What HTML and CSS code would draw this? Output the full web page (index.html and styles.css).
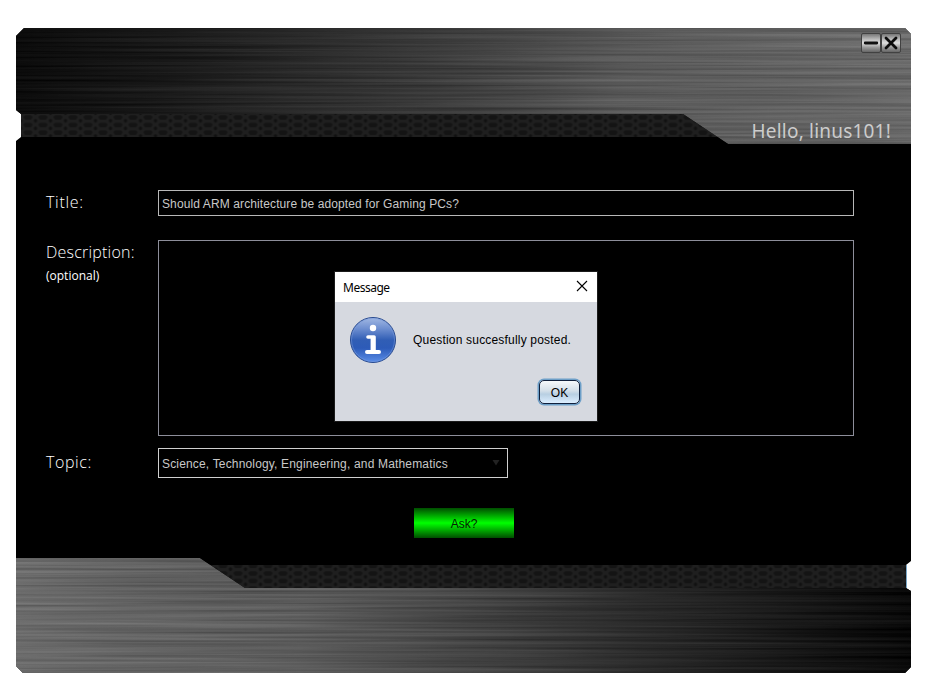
FILE: index.html
```html
<!DOCTYPE html>
<html lang="en">
<head>
<meta charset="utf-8">
<title>Ask a question</title>
<link rel="stylesheet" href="styles.css">
</head>
<body>
<main class="window">
  <svg class="chrome" width="895" height="645" viewBox="0 0 895 645" aria-hidden="true">
    <defs>
      <linearGradient id="metalTop" gradientUnits="userSpaceOnUse" x1="0" y1="0" x2="895" y2="50">
        <stop offset="0" stop-color="#0b0b0b"/><stop offset=".17" stop-color="#191919"/>
        <stop offset=".34" stop-color="#2c2c2c"/><stop offset=".52" stop-color="#434343"/>
        <stop offset=".68" stop-color="#595959"/><stop offset="1" stop-color="#696969"/>
      </linearGradient>
      <linearGradient id="metalBottom" gradientUnits="userSpaceOnUse" x1="0" y1="595" x2="895" y2="645">
        <stop offset="0" stop-color="#6b6b6b"/><stop offset=".32" stop-color="#5b5b5b"/>
        <stop offset=".5" stop-color="#434343"/><stop offset=".7" stop-color="#2a2a2a"/>
        <stop offset=".87" stop-color="#171717"/><stop offset="1" stop-color="#090909"/>
      </linearGradient>
      <filter id="brushed" x="0" y="0" width="100%" height="100%" color-interpolation-filters="sRGB">
        <feTurbulence type="fractalNoise" baseFrequency="0.003 0.35" numOctaves="3" seed="21" result="n"/>
        <feColorMatrix in="n" type="matrix" values=".5 0 0 0 .25  .5 0 0 0 .25  .5 0 0 0 .25  0 0 0 0 1" result="g"/>
        <feComposite in="SourceGraphic" in2="g" operator="arithmetic" k1=".5" k2=".75" k3=".2" k4="-.1" result="m"/>
        <feComposite in="m" in2="SourceGraphic" operator="in"/>
      </filter>
      <pattern id="mesh" width="15" height="7.6" patternUnits="userSpaceOnUse" x="4.5" y="86">
        <rect width="15" height="7.6" fill="#1f1f1f"/>
        <path d="M4.5 1.2h6l1.8 2-1.8 2.4h-6l-1.8-2.4z" fill="#141414"/>
        <path d="M-1.6 5.6L0 4.7 1.6 5.6v2L0 9l-1.6-1.4zM-1.6-2L0-2.9 1.6-2V0L0 1.4-1.6 0zM13.4 5.6l1.6-.9 1.6.9v2L15 9l-1.6-1.4zM13.4-2l1.6-.9 1.6.9v2L15 1.4 13.4 0z" fill="#111"/>
      </pattern>
      <clipPath id="frame"><path d="M8 0H889L895 6V533L890 537V560L895 563V639L889 645H7L0 638V113L5 109V86L0 82V8z"/></clipPath>
    </defs>
    <g clip-path="url(#frame)">
      <rect width="895" height="645" fill="#000"/>
      <rect x="5" y="86" width="708" height="23" fill="url(#mesh)"/>
      <rect x="184" y="537" width="706" height="23" fill="url(#mesh)"/>
      <path d="M0 0H895V116H712L667 86H0z" fill="url(#metalTop)" filter="url(#brushed)"/>
      <path d="M0 530H184L229 560H895V645H0z" fill="url(#metalBottom)" filter="url(#brushed)"/>
    </g>
    <path d="M890.5 537v23" stroke="#7aa7c7"/>
  </svg>

  <header class="header">
    <div class="controls">
      <button class="control" aria-label="Minimize"><svg width="20" height="20" viewBox="0 0 20 20"><path d="M4.2 10h11.6" stroke="#111" stroke-width="2.8" stroke-linecap="round"/></svg></button>
      <button class="control" aria-label="Close"><svg width="20" height="20" viewBox="0 0 20 20"><path d="M5 5l10 10M15 5L5 15" stroke="#0c0c0c" stroke-width="2.8" stroke-linecap="round"/></svg></button>
    </div>
    <div class="greeting">Hello, linus101!</div>
  </header>

  <form class="form">
    <div class="row row-title">
      <div class="label label-title">Title:</div>
      <div class="field title-field"><span class="value-title">Should ARM architecture be adopted for Gaming PCs?</span></div>
    </div>
    <div class="row row-description">
      <div class="label"><span class="label-description">Description:</span><div class="optional"><span>(optional)</span></div></div>
      <div class="field area"></div>
    </div>
    <div class="row row-topic">
      <div class="label label-topic">Topic:</div>
      <div class="field select"><span class="value-topic">Science, Technology, Engineering, and Mathematics</span><svg width="8" height="6" viewBox="0 0 8 6"><path d="M.5 0h7L4 5.5z" fill="#222"/></svg></div>
    </div>
    <button class="ask" type="button">Ask?</button>
  </form>

  <section class="dialog" role="dialog">
    <div class="dialog-bar">
      <span class="dialog-title">Message</span>
      <svg class="dialog-close" width="12" height="12" viewBox="0 0 12 12"><path d="M1 1l10 10M11 1L1 11" stroke="#000" stroke-width="1.1"/></svg>
    </div>
    <div class="dialog-body">
      <svg width="48" height="48" viewBox="0 0 48 48">
        <defs><linearGradient id="info" x2="0" y2="1"><stop offset="0" stop-color="#a3b9e3"/><stop offset=".25" stop-color="#6d8ed0"/><stop offset=".5" stop-color="#315eb5"/><stop offset=".68" stop-color="#2d5bb8"/><stop offset="1" stop-color="#5b8ee8"/></linearGradient></defs>
        <circle cx="24" cy="24" r="22.5" fill="url(#info)" stroke="#27498f"/>
        <circle cx="24" cy="24" r="21.5" fill="none" stroke="#7d9fe0" stroke-opacity=".5"/>
        <circle cx="24" cy="12" r="3.2" fill="#fff"/>
        <path d="M19 19.2h6.2q1.6 0 1.6 1.6V34h3.2a2 2 0 0 1 0 4H18a2 2 0 0 1 0-4h3.6V22.8H19a1.8 1.8 0 0 1 0-3.6z" fill="#fff"/>
      </svg>
      <span class="dialog-text">Question succesfully posted.</span>
    </div>
    <div class="dialog-actions"><button class="ok">OK</button></div>
  </section>
</main>
</body>
</html>
```
FILE: styles.css
```css
* { box-sizing: border-box; }
body { margin: 0; padding: 28px 0 0 16px; height: 700px; overflow: hidden; background: #fff; font: 12px "Liberation Sans", Arial, sans-serif; }
button { font: inherit; border: 0; padding: 0; }
svg { display: block; flex: none; }
span { white-space: nowrap; }
.window { position: relative; width: 895px; height: 645px; }
.chrome { position: absolute; inset: 0; }
.header { position: relative; height: 116px; padding: 5px 10px 0 0; display: flex; flex-direction: column; align-items: flex-end; }
.controls { display: flex; }
.control { width: 20px; height: 20px; border: 1px solid #414141; border-radius: 2px; background: linear-gradient(#777, #bcbcbc 30%, #dedede 50%, #999 75%, #656565); display: flex; align-items: center; justify-content: center; }
.greeting { margin: 65px 10px 0 0; font: 19px/26px "Noto Sans", sans-serif; letter-spacing: .2px; color: #ccc; white-space: nowrap; }
.form { position: relative; padding: 46px 57px 0 30px; }
.row { display: flex; }
.label { width: 112px; flex: none; color: #fff; font: 300 16px/24px "Open Sans", "Noto Sans", sans-serif; letter-spacing: .22px; }
.label-title { letter-spacing: .7px; }
.field { border: 1px solid #b8b8b8; background: #000; color: #c8c8c8; display: flex; align-items: center; padding: 0 4px 0 3px; }
.title-field { width: 696px; height: 26px; padding-top: 2px; }
.value-title { letter-spacing: .11px; }
.value-topic { letter-spacing: .165px; padding-top: 1px; }
.row-description { margin-top: 24px; }
.area { width: 696px; height: 196px; border-color: #8d8e9a; }
.optional { font-size: 12px; font-weight: 400; line-height: 24px; letter-spacing: 0; }
.row-topic { margin-top: 12px; }
.label-topic { padding-top: 2px; letter-spacing: .6px; }
.select { width: 350px; height: 30px; border-color: #d0d0d0; justify-content: space-between; padding-right: 7px; }
.ask { display: block; width: 100px; height: 30px; margin: 30px 0 0 368px; padding-top: 2px; background: linear-gradient(#004d00, #0f0 50%, #004d00); color: #062006; }
.dialog { position: absolute; left: 318px; top: 243px; width: 264px; height: 151px; border: 1px solid #1b1b1b; background: #d6d9e0; color: #000; }
.dialog-bar { height: 30px; padding: 0 9px 0 8px; background: #fff; display: flex; align-items: center; justify-content: space-between; font: 12px "Noto Sans", sans-serif; letter-spacing: -.5px; }
.dialog-close { margin-bottom: 2px; }
.dialog-text { letter-spacing: .19px; }
.dialog-body { display: flex; align-items: center; padding: 14px 0 0 14px; gap: 16px; }
.dialog-actions { display: flex; justify-content: flex-end; padding: 16px 17px 0 0; }
.ok { width: 41px; height: 24px; padding-top: 2px; border: 1px solid #10203c; border-radius: 5px; background: linear-gradient(#f6f9fb, #d3dfe9 45%, #b8cfe2 60%, #dceeff); box-shadow: 0 0 0 1.5px #6d9fc8; }
```
